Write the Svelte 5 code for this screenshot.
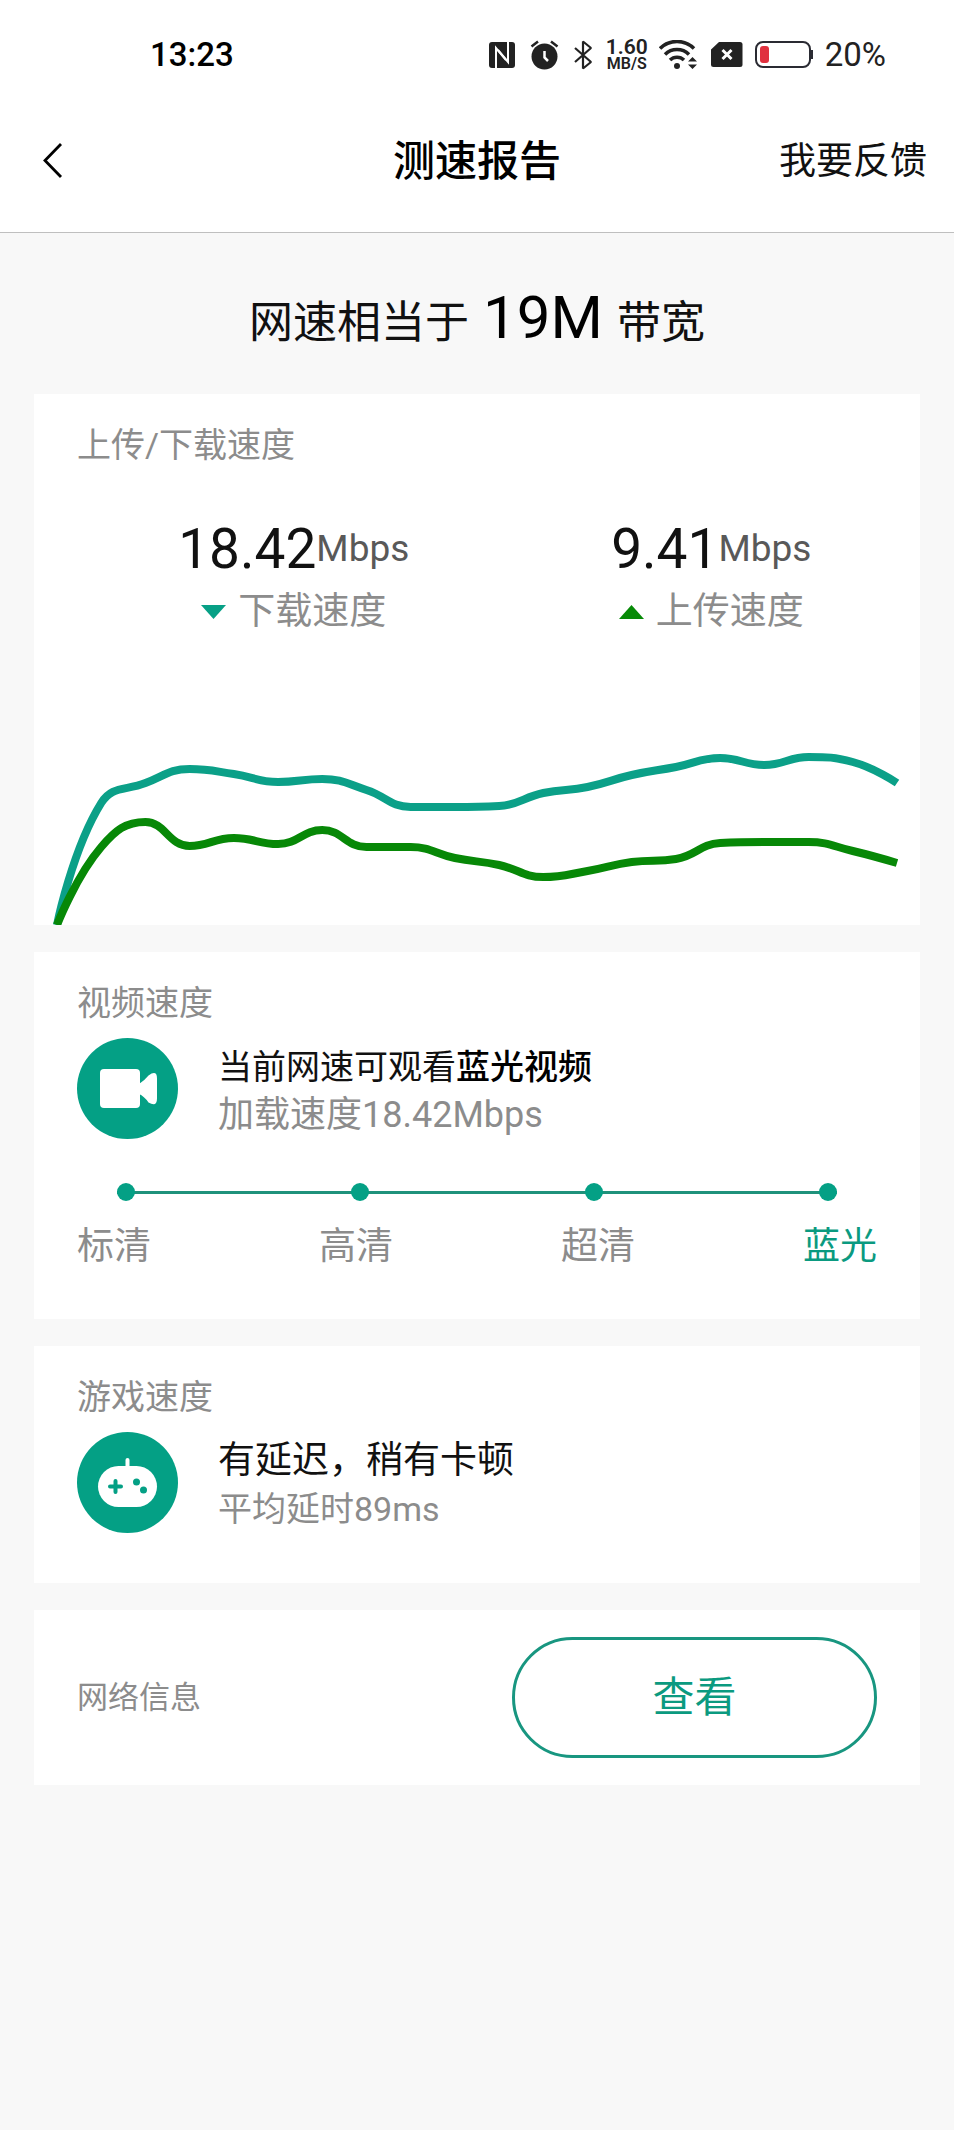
<script lang="ts">
	type Point = { x: number; y: number };

	const downloadSpeed = '18.42';
	const uploadSpeed = '9.41';

	const levels = ['标清', '高清', '超清', '蓝光'];
	const currentLevel = '蓝光';

	const chartWidth = 886;
	const chartHeight = 186;
	const chartPadding = 23;

	// samples, as height above the chart's bottom edge
	const downloadSamples = [0, 122, 142, 156, 151, 143, 146, 135, 118, 118, 119, 132, 138, 150, 158, 167, 160, 168, 163, 142];
	const uploadSamples = [0, 78, 103, 79, 87, 81, 95, 78, 78, 67, 60, 48, 54, 63, 66, 82, 83, 83, 74, 62];

	function toPoints(samples: number[]): Point[] {
		const step = (chartWidth - chartPadding * 2) / (samples.length - 1);
		return samples.map((value, i) => ({ x: chartPadding + i * step, y: chartHeight - value }));
	}

	function clamp(value: number, a: number, b: number) {
		return Math.max(Math.min(value, Math.max(a, b)), Math.min(a, b));
	}

	// bezier through all points, handles never leave the box between neighbours
	function smoothPath(points: Point[], smooth = 0.45) {
		let out = points[0];
		let d = `M${out.x} ${out.y}`;

		for (let i = 1; i < points.length; i++) {
			const prev = points[i - 1];
			const p = points[i];
			const next = points[i + 1];
			let into = p;
			let nextOut = p;

			if (next) {
				const lenPrev = Math.hypot(p.x - prev.x, p.y - prev.y);
				const lenNext = Math.hypot(next.x - p.x, next.y - p.y);
				const ratio = lenNext / (lenNext + lenPrev);

				nextOut = {
					x: clamp(p.x + (next.x - prev.x) * smooth * ratio, p.x, next.x),
					y: clamp(p.y + (next.y - prev.y) * smooth * ratio, p.y, next.y)
				};
				into = {
					x: clamp(p.x - ((nextOut.x - p.x) * lenPrev) / lenNext, prev.x, p.x),
					y: clamp(p.y - ((nextOut.y - p.y) * lenPrev) / lenNext, prev.y, p.y)
				};
				nextOut = {
					x: p.x + ((p.x - into.x) * lenNext) / lenPrev,
					y: p.y + ((p.y - into.y) * lenNext) / lenPrev
				};
			}

			d += `C${out.x} ${out.y} ${into.x} ${into.y} ${p.x} ${p.y}`;
			out = nextOut;
		}

		return d;
	}

	const downloadPath = smoothPath(toPoints(downloadSamples));
	const uploadPath = smoothPath(toPoints(uploadSamples));
</script>

<div class="page">
	<div class="status-bar">
		<span class="clock">13:23</span>
		<div class="status-icons">
			<svg width="30" height="30" viewBox="0 0 30 30">
				<rect x="2" y="2" width="26" height="26" rx="3" fill="#222" />
				<path d="M9 24V8l10 12" fill="none" stroke="#fff" stroke-width="2" />
				<path d="M21 6v16L11 10" fill="none" stroke="#fff" stroke-width="2" />
				<path d="M9 28v-5M21 2v5" fill="none" stroke="#fff" stroke-width="2" />
			</svg>
			<svg width="30" height="30" viewBox="0 0 30 30">
				<circle cx="15.500" cy="16.500" r="13" fill="#222" />
				<path d="M2.500 6.500l6.500-5M28.500 6.500l-6.500-5" stroke="#222" stroke-width="2.500" />
				<path d="M15.500 11v6.500l3.500 3.500" fill="none" stroke="#fff" stroke-width="2.500" />
			</svg>
			<svg width="24" height="30" viewBox="0 0 24 30">
				<path
					d="M4 8l16 14-8 6.500V1.500L20 8 4 22"
					fill="none"
					stroke="#222"
					stroke-width="2.200"
					stroke-linejoin="bevel"
				/>
			</svg>
			<span class="net-speed">
				<span>1.60</span>
				<span class="net-unit">MB/S</span>
			</span>
			<svg width="40" height="30" viewBox="0 0 40 30">
				<g fill="none" stroke="#222" stroke-width="3.500">
					<path d="M1 8.500a24 24 0 0 1 34 0" />
					<path d="M6 14.500a17 17 0 0 1 24 0" />
					<path d="M11 20a10 10 0 0 1 14 0" />
				</g>
				<circle cx="18" cy="26" r="3" fill="#222" />
				<path d="M29 21.500l4.500-4.500 4.500 4.500zM29 24.500l4.500 4.500 4.500-4.500z" fill="#222" />
			</svg>
			<svg width="32" height="30" viewBox="0 0 32 30">
				<path d="M8 2h21a2.500 2.500 0 0 1 2.500 2.500v20a2.500 2.500 0 0 1-2.500 2.500H2.500A2.500 2.500 0 0 1 0 24.500V9.500z" fill="#222" />
				<path d="M11.500 10l9 9M20.500 10l-9 9" stroke="#fff" stroke-width="3" />
			</svg>
			<svg width="58" height="30" viewBox="0 0 58 30">
				<rect x="1" y="2" width="54" height="25" rx="7" fill="none" stroke="#2a2b33" stroke-width="2" />
				<rect x="5" y="6" width="9" height="17" rx="3" fill="#e0313f" />
				<path d="M57 10v9" stroke="#2a2b33" stroke-width="2" />
			</svg>
			<span class="battery-level">20%</span>
		</div>
	</div>

	<header class="nav">
		<button class="back" type="button" aria-label="返回">
			<svg width="24" height="38" viewBox="0 0 24 38">
				<path d="M20 1L4 17.500 20 34" fill="none" stroke="#000" stroke-width="2.800" />
			</svg>
		</button>
		<h1>测速报告</h1>
		<a class="feedback" href="#feedback">我要反馈</a>
	</header>

	<p class="summary">
		<span>网速相当于</span>
		<span class="bandwidth">19M</span>
		<span>带宽</span>
	</p>

	<main>
		<section class="card speed-card">
			<h2>上传/下载速度</h2>
			<div class="speeds">
				<div class="speed">
					<div class="speed-value">
						<span class="number">{downloadSpeed}</span><span class="unit">Mbps</span>
					</div>
					<div class="speed-label">
						<svg width="25" height="14" viewBox="0 0 25 14"><path d="M0 0h25L12.500 14z" fill="#07a086" /></svg>
						下载速度
					</div>
				</div>
				<div class="speed">
					<div class="speed-value">
						<span class="number">{uploadSpeed}</span><span class="unit">Mbps</span>
					</div>
					<div class="speed-label">
						<svg width="25" height="14" viewBox="0 0 25 14"><path d="M0 14h25L12.500 0z" fill="#078a07" /></svg>
						上传速度
					</div>
				</div>
			</div>
			<svg class="chart" viewBox="0 0 {chartWidth} {chartHeight}">
				<path d={downloadPath} stroke="#0ba088" />
				<path d={uploadPath} stroke="#078807" />
			</svg>
		</section>

		<section class="card video-card">
			<h2>视频速度</h2>
			<div class="result">
				<svg class="badge" viewBox="0 0 101 101">
					<circle cx="50.500" cy="50.500" r="50.500" fill="#04a085" />
					<rect x="23" y="31" width="40" height="39" rx="4" fill="#fff" />
					<path d="M62 46q5-3 9.500-8.500 8.500-6 8.500 3v20q0 9-8.500 4Q67 58 62 56z" fill="#fff" />
				</svg>
				<div class="result-text">
					<p class="verdict">当前网速可观看<b>蓝光视频</b></p>
					<p class="detail">加载速度18.42Mbps</p>
				</div>
			</div>
			<div class="track">
				{#each levels as level}
					<span class="dot"></span>
				{/each}
			</div>
			<div class="levels">
				{#each levels as level}
					<span class:active={level === currentLevel}>{level}</span>
				{/each}
			</div>
		</section>

		<section class="card">
			<h2>游戏速度</h2>
			<div class="result">
				<svg class="badge" viewBox="0 0 101 101">
					<circle cx="50.500" cy="50.500" r="50.500" fill="#04a085" />
					<path d="M50.500 28v10" stroke="#fff" stroke-width="4" stroke-linecap="round" />
					<rect x="21" y="34" width="59" height="41" rx="20.500" fill="#fff" />
					<path d="M33 54.500h11M38.500 49v11" stroke="#04a085" stroke-width="4" stroke-linecap="round" />
					<circle cx="59.500" cy="50" r="3.500" fill="#04a085" />
					<circle cx="66.500" cy="58" r="3.500" fill="#04a085" />
				</svg>
				<div class="result-text">
					<p class="verdict large">有延迟，稍有卡顿</p>
					<p class="detail small">平均延时89ms</p>
				</div>
			</div>
		</section>

		<section class="card network">
			<span class="network-label">网络信息</span>
			<button class="view" type="button">查看</button>
		</section>
	</main>
</div>

<style>
	:global(body) {
		background: #f8f8f8;
	}

	.page {
		font-family: Roboto, 'Noto Sans CJK SC', sans-serif;
		color: #111;
	}

	h1,
	h2,
	p {
		margin: 0;
		font-weight: 400;
	}

	svg {
		display: block;
		flex: none;
	}

	.status-bar {
		display: flex;
		align-items: center;
		justify-content: space-between;
		height: 70px;
		padding: 20px 68px 0 150px;
		background: #fff;
	}

	.clock {
		font-size: 33px;
		font-weight: 500;
		line-height: 48px;
		color: #000;
	}

	.status-icons {
		display: flex;
		align-items: center;
		gap: 12px;
	}

	.net-speed {
		display: flex;
		flex-direction: column;
		align-items: center;
		width: 40px;
		font-size: 21px;
		font-weight: 600;
		line-height: 18px;
		color: #222;
	}

	.net-unit {
		font-size: 16px;
		line-height: 16px;
	}

	.battery-level {
		font-size: 33px;
		line-height: 48px;
		color: #222;
	}

	.nav {
		display: grid;
		grid-template-columns: 1fr auto 1fr;
		align-items: center;
		height: 140px;
		padding: 2px 27px 0;
		background: #fff;
		border-bottom: 1px solid #bfbfbf;
	}

	.back {
		justify-self: start;
		padding: 0 14px;
		border: 0;
		background: none;
		cursor: pointer;
	}

	h1 {
		font-size: 42px;
		font-weight: 500;
		line-height: 60px;
		color: #000;
	}

	.feedback {
		justify-self: end;
		font-size: 37px;
		line-height: 48px;
		color: #111;
		text-decoration: none;
	}

	.summary {
		display: flex;
		align-items: baseline;
		justify-content: center;
		gap: 14px;
		padding: 42px 0 28px;
		font-size: 44px;
		line-height: 86px;
	}

	.bandwidth {
		font-size: 60px;
		color: #000;
	}

	main {
		display: flex;
		flex-direction: column;
		gap: 27px;
		padding: 0 34px 60px;
	}

	.card {
		padding: 27px 43px 50px;
		background: #fff;
	}

	h2 {
		font-size: 34px;
		line-height: 48px;
		color: #8c8c8c;
	}

	.speed-card {
		padding: 27px 0 0;
	}

	.speed-card h2 {
		padding: 0 43px;
	}

	.video-card {
		padding-bottom: 48px;
	}

	.speeds {
		display: grid;
		grid-template-columns: 1fr 1fr;
		margin-top: 50px;
		padding-left: 51px;
	}

	.speed {
		display: flex;
		flex-direction: column;
		align-items: center;
		gap: 9px;
	}

	.speed-value {
		display: flex;
		align-items: center;
		line-height: 60px;
	}

	.number {
		font-size: 55px;
	}

	.unit {
		font-size: 37px;
		color: #595959;
	}

	.speed-label {
		display: flex;
		align-items: center;
		gap: 12px;
		font-size: 37px;
		line-height: 48px;
		color: #8c8c8c;
	}

	.chart {
		width: 100%;
		margin-top: 103px;
	}

	.chart path {
		fill: none;
		stroke-width: 8;
	}

	.result {
		display: flex;
		align-items: center;
		gap: 40px;
		margin-top: 11px;
	}

	.badge {
		width: 101px;
		height: 101px;
	}

	.result-text {
		padding-top: 4px;
		line-height: 48px;
	}

	.verdict {
		font-size: 34px;
		color: #111;
	}

	.verdict b {
		font-weight: 500;
		color: #000;
	}

	.detail {
		font-size: 36px;
		color: #8c8c8c;
	}

	.verdict.large {
		font-size: 37px;
	}

	.detail.small {
		font-size: 34px;
	}

	.track {
		display: flex;
		justify-content: space-between;
		margin: 44px 40px 22px;
		background: linear-gradient(#1f927b, #1f927b) center / 100% 3px no-repeat;
	}

	.dot {
		width: 18px;
		height: 18px;
		border-radius: 50%;
		background: #04a085;
	}

	.levels {
		display: flex;
		justify-content: space-between;
		font-size: 37px;
		line-height: 48px;
		color: #8c8c8c;
	}

	.levels .active {
		color: #0b9a80;
	}

	.network {
		display: flex;
		align-items: center;
		justify-content: space-between;
		padding: 27px 43px;
	}

	.network-label {
		font-size: 31px;
		line-height: 48px;
		color: #8c8c8c;
	}

	.view {
		width: 365px;
		height: 121px;
		border: 3px solid #189680;
		border-radius: 61px;
		background: #fff;
		font-family: inherit;
		font-size: 42px;
		line-height: 60px;
		color: #0b9a80;
		cursor: pointer;
	}
</style>
